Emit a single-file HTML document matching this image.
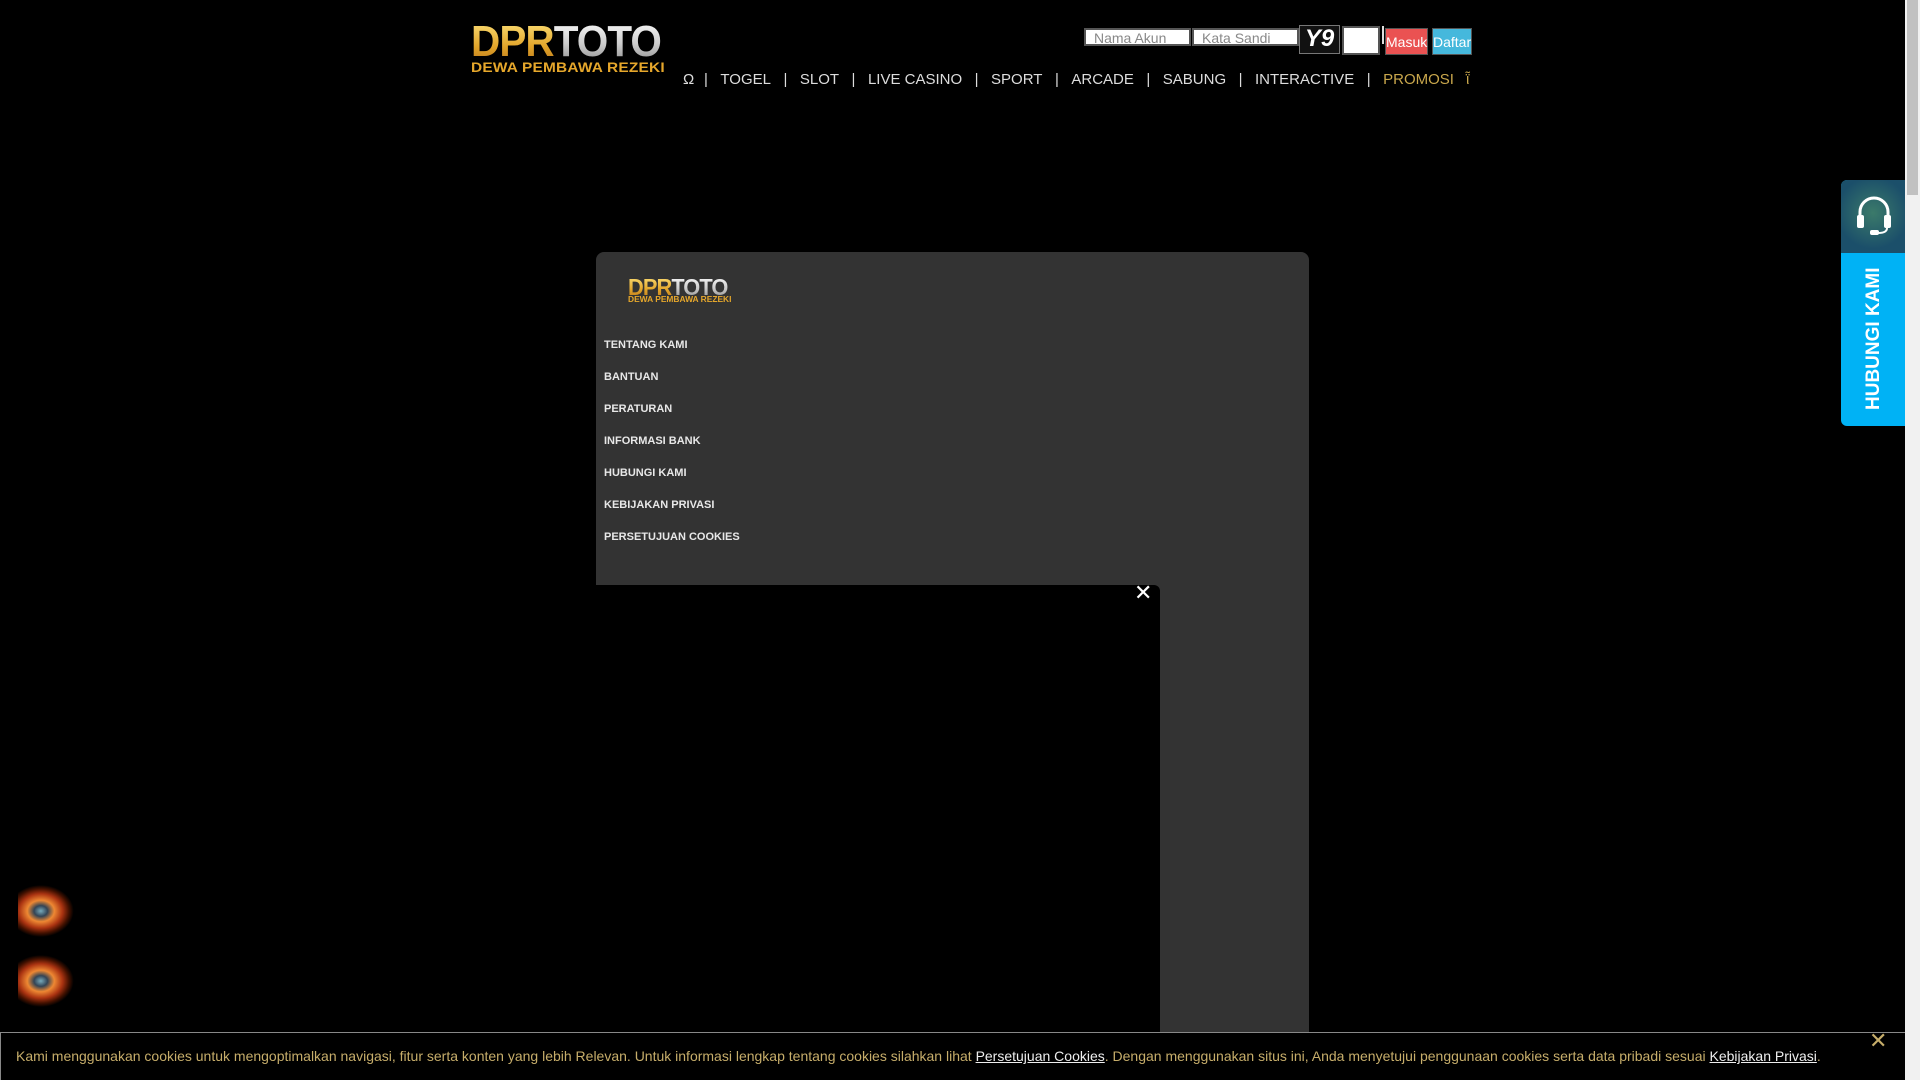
<!DOCTYPE html>
<html><head><meta charset="utf-8"><style>
*{margin:0;padding:0;box-sizing:border-box}
html{width:1920px;height:1080px;overflow:hidden;background:#000}
body{width:1920px;height:1080px;background:#000;overflow:hidden;position:relative;font-family:"Liberation Sans",sans-serif}
.abs{position:absolute}
.logo{font-family:"Liberation Sans",sans-serif;font-weight:bold;letter-spacing:-1px}
.gold{background:linear-gradient(#ffe680,#e2a52a 60%,#b8741a);-webkit-background-clip:text;color:transparent}
.silver{background:linear-gradient(#fff,#ccc 55%,#888);-webkit-background-clip:text;color:transparent}
.nav{top:71px;font-size:15px;color:#ddd;white-space:nowrap}
.inp{background:#fff;border:2px solid #555;color:#888;font-size:14px;line-height:16px;padding-left:8px}
.menu{left:604px;font-size:11px;font-weight:bold;color:#e8e8e8}
.ck{color:#c6ad6a;font-size:14px}
.ck u{color:#eee}
</style></head><body>
<!-- logo -->
<div class="abs logo" style="left:471px;top:17px;font-size:44px;transform:scaleX(0.92);transform-origin:left;"><span class="gold">DPR</span><span class="silver">TOTO</span></div>
<div class="abs" style="left:471px;top:59px;font-size:14px;font-weight:bold;color:#e6a72b;letter-spacing:0.2px;transform:scaleX(1.1);transform-origin:left">DEWA PEMBAWA REZEKI</div>
<!-- login -->
<div class="abs inp" style="left:1084px;top:28px;width:107px;height:18px">Nama Akun</div>
<div class="abs inp" style="left:1192px;top:28px;width:107px;height:18px">Kata Sandi</div>
<div class="abs" style="left:1299px;top:25px;width:41px;height:29px;background:#111;border:1px solid #777;color:#fff;font-size:24px;font-weight:bold;text-align:center;line-height:26px;font-style:italic">Y9</div>
<div class="abs" style="left:1342px;top:26px;width:38px;height:29px;background:#fff;border:2px solid #555"></div>
<div class="abs" style="left:1382px;top:26px;width:2px;height:18px;background:#ddd"></div>
<div class="abs" style="left:1385px;top:28px;width:43px;height:27px;background:#ea5252;color:#fff;font-size:14px;line-height:27px;text-align:center;border:1px solid #555">Masuk</div>
<div class="abs" style="left:1432px;top:28px;width:40px;height:27px;background:#45b8dc;color:#fff;font-size:14px;line-height:27px;text-align:center;border:1px solid #555">Daftar</div>
<!-- nav -->
<div class="abs nav" style="left:683px">Ω</div>
<div class="abs nav" style="left:704px">|&nbsp;&nbsp;&nbsp;TOGEL&nbsp;&nbsp;&nbsp;|&nbsp;&nbsp;&nbsp;SLOT&nbsp;&nbsp;&nbsp;|&nbsp;&nbsp;&nbsp;LIVE CASINO&nbsp;&nbsp;&nbsp;|&nbsp;&nbsp;&nbsp;SPORT&nbsp;&nbsp;&nbsp;|&nbsp;&nbsp;&nbsp;ARCADE&nbsp;&nbsp;&nbsp;|&nbsp;&nbsp;&nbsp;SABUNG&nbsp;&nbsp;&nbsp;|&nbsp;&nbsp;&nbsp;INTERACTIVE&nbsp;&nbsp;&nbsp;|&nbsp;&nbsp;&nbsp;<span style="color:#c9a74c">PROMOSI</span></div>
<div class="abs nav" style="left:1466px;color:#c9a74c">ῗ</div>
<!-- panel -->
<div class="abs" style="left:596px;top:252px;width:713px;height:828px;background:#333;border-radius:8px 8px 0 0"></div>
<div class="abs logo" style="left:628px;top:274px;font-size:23px;transform:scaleX(0.95);transform-origin:left"><span class="gold">DPR</span><span class="silver">TOTO</span></div>
<div class="abs" style="left:628px;top:295px;font-size:8px;font-weight:bold;color:#e6a72b;transform:scaleX(1.05);transform-origin:left">DEWA PEMBAWA REZEKI</div>
<div class="abs menu" style="top:339px">TENTANG KAMI</div>
<div class="abs menu" style="top:371px">BANTUAN</div>
<div class="abs menu" style="top:403px">PERATURAN</div>
<div class="abs menu" style="top:435px">INFORMASI BANK</div>
<div class="abs menu" style="top:467px">HUBUNGI KAMI</div>
<div class="abs menu" style="top:499px">KEBIJAKAN PRIVASI</div>
<div class="abs menu" style="top:531px">PERSETUJUAN COOKIES</div>
<div class="abs" style="left:596px;top:585px;width:564px;height:495px;background:#000;border-radius:0 6px 0 0"></div>
<div class="abs" style="left:1134px;top:580px;color:#fff;font-size:22px">✕</div>
<!-- hubungi -->
<div class="abs" style="left:1841px;top:180px;width:64px;height:246px;background:#00b2f5;border-radius:6px 0 0 6px;overflow:hidden">
<div style="height:73px;background:radial-gradient(circle at 50% 45%,#3b7a6a,#1b4f6a 70%)"></div>
<svg class="abs" style="left:14px;top:14px" width="38" height="42" viewBox="0 0 38 42"><path d="M5 24V18a14 14 0 0 1 28 0v6" fill="none" stroke="#fff" stroke-width="3"/><rect x="2" y="21" width="7" height="13" rx="2" fill="#fff"/><rect x="29" y="21" width="7" height="13" rx="2" fill="#fff"/><path d="M32 34q0 5-9 5" fill="none" stroke="#fff" stroke-width="2"/><rect x="15" y="36" width="9" height="5" rx="2" fill="#fff"/></svg>
<div class="abs" style="left:22px;top:230px;transform:rotate(-90deg);transform-origin:left top;color:#fff;font-weight:bold;font-size:19px;white-space:nowrap">HUBUNGI KAMI</div>
</div>
<!-- scrollbar -->
<div class="abs" style="left:1905px;top:0;width:15px;height:1080px;background:#f1f1f1"></div>
<div class="abs" style="left:1907px;top:0;width:11px;height:195px;background:#c1c1c1"></div>
<!-- fire icons -->
<div class="abs" style="left:18px;top:884px;width:57px;height:54px;background:radial-gradient(ellipse at 40% 50%,#7ab 0,#345 14%,#e83 28%,#a31 45%,#410 58%,transparent 68%)"></div>
<div class="abs" style="left:18px;top:954px;width:57px;height:54px;background:radial-gradient(ellipse at 40% 50%,#7ab 0,#345 14%,#e83 28%,#a31 45%,#410 58%,transparent 68%)"></div>
<!-- cookie -->
<div class="abs" style="left:0;top:1032px;width:1905px;height:48px;background:#000;border-top:1px solid #888;border-left:1px solid #888"></div>
<div class="abs ck" style="left:16px;top:1048px;white-space:nowrap">Kami menggunakan cookies untuk mengoptimalkan navigasi, fitur serta konten yang lebih Relevan. Untuk informasi lengkap tentang cookies silahkan lihat <u>Persetujuan Cookies</u>. Dengan menggunakan situs ini, Anda menyetujui penggunaan cookies serta data pribadi sesuai <u>Kebijakan Privasi</u>.</div>
<div class="abs" style="left:1869px;top:1028px;color:#c6ad6a;font-size:22px">✕</div>
</body></html>
